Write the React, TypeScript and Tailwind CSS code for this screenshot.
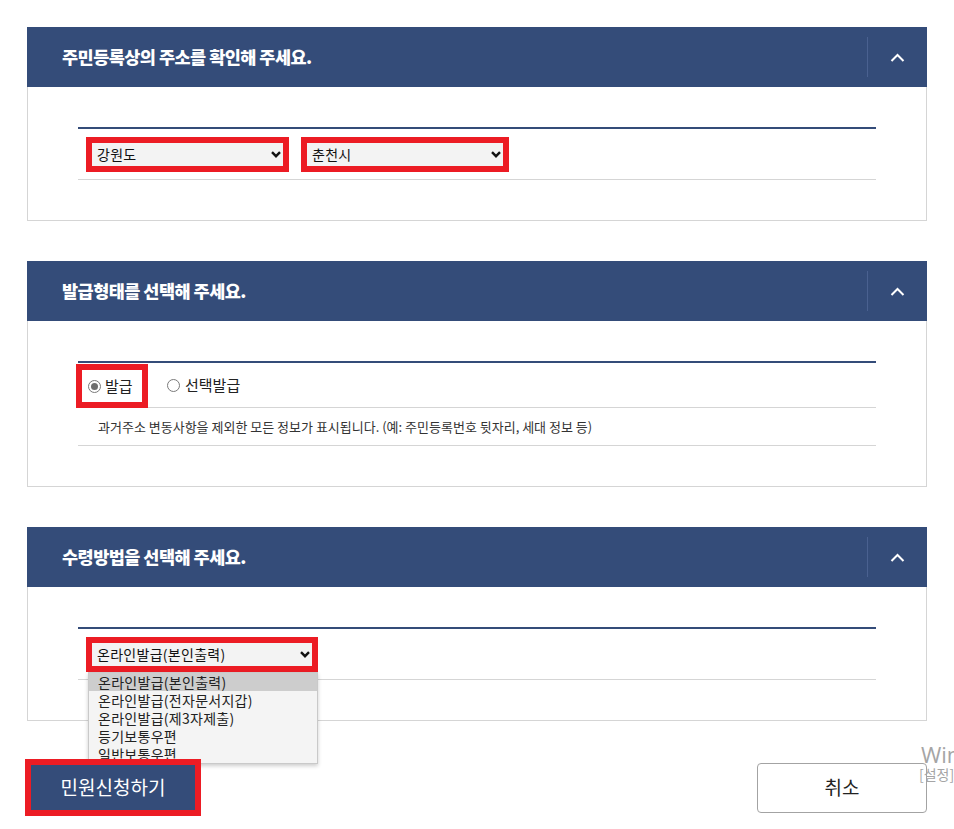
import { ReactNode } from "react";

const NAVY = "bg-[#344c79]";

function ChevronUp() {
  return (
    <svg width="15" height="9" viewBox="0 0 15 9" fill="none">
      <polyline points="1.5,8 7.5,2 13.5,8" stroke="white" strokeWidth="2" />
    </svg>
  );
}

function ChevronDown() {
  return (
    <svg width="10" height="7" viewBox="0 0 10 7" fill="none">
      <polyline points="1,1.2 5,5.2 9,1.2" stroke="#111" strokeWidth="2.4" />
    </svg>
  );
}

function Section({
  title,
  children,
  last,
}: {
  title: string;
  children: ReactNode;
  last?: boolean;
}) {
  return (
    <section className={last ? "mb-[38px]" : "mb-10"}>
      {/* 헤더 */}
      <div className={`flex h-[60px] items-center ${NAVY}`}>
        <h2 className="flex-1 pl-[35px] text-[17.5px] font-extrabold tracking-[-0.03em] text-white">
          {title}
        </h2>
        <div className="h-10 w-px bg-[#4a6190]" />
        <div className="flex w-[59px] items-center justify-center">
          <ChevronUp />
        </div>
      </div>
      {/* 내용 */}
      <div className="border border-t-0 border-[#d5d5d5] px-[50px] py-10">
        <div className="border-t-2 border-[#344c79]">{children}</div>
      </div>
    </section>
  );
}

function FakeSelect({ value, width }: { value: string; width: string }) {
  return (
    <div className="border-[6px] border-[#ec1c24]">
      <div
        className={`flex h-[23px] items-center justify-between bg-[#f3f3f3] pl-[5px] pr-[2px] text-[14px] tracking-[0.02em] text-[#111] ${width}`}
      >
        <span>{value}</span>
        <ChevronDown />
      </div>
    </div>
  );
}

function Radio({ checked }: { checked?: boolean }) {
  return (
    <span className="flex h-[13px] w-[13px] items-center justify-center rounded-full border border-[#7a7a7a] bg-white">
      {checked && <span className="h-[7px] w-[7px] rounded-full bg-[#6f6f6f]" />}
    </span>
  );
}

const options = [
  "온라인발급(본인출력)",
  "온라인발급(전자문서지갑)",
  "온라인발급(제3자제출)",
  "등기보통우편",
  "일반보통우편",
];

export default function App() {
  return (
    <div className="relative min-h-[829px] w-full overflow-hidden bg-white font-['Noto_Sans_CJK_KR','Noto_Sans',sans-serif] text-[#222]">
      <div className="ml-[27px] w-[900px] pt-[27px]">
        <Section title="주민등록상의 주소를 확인해 주세요.">
          <div className="flex h-[51px] items-center gap-3 border-b border-[#d5d5d5] pl-2">
            <FakeSelect value="강원도" width="w-[191px]" />
            <FakeSelect value="춘천시" width="w-[196px]" />
          </div>
        </Section>

        <Section title="발급형태를 선택해 주세요.">
          <div className="flex h-[45px] items-end border-b border-[#d5d5d5]">
            <div className="-mb-px -ml-[2px] flex h-[44px] w-[72px] items-center gap-[4px] border-[6px] border-[#ec1c24] pl-[6px] text-[15px]">
              <Radio checked />
              <span>발급</span>
            </div>
            <div className="ml-[19px] flex h-[44px] items-center gap-[5px] text-[15px]">
              <Radio />
              <span>선택발급</span>
            </div>
          </div>
          <div className="flex h-[38px] items-center border-b border-[#d5d5d5] pl-5 text-[13px] text-[#333]">
            과거주소 변동사항을 제외한 모든 정보가 표시됩니다. (예: 주민등록번호 뒷자리, 세대 정보 등)
          </div>
        </Section>

        <Section title="수령방법을 선택해 주세요." last>
          <div className="flex h-[51px] items-center border-b border-[#d5d5d5] pl-2">
            <div className="relative">
              <FakeSelect value="온라인발급(본인출력)" width="w-[220px]" />
              {/* 열린 목록 */}
              <ul className="absolute left-[2px] top-full z-10 w-[230px] border border-[#c9c9c9] bg-[#f4f4f4] text-[14px] tracking-[0.02em] shadow-[0_2px_4px_rgba(0,0,0,0.2)]">
                {options.map((o, i) => (
                  <li
                    key={o}
                    className={`h-[18px] pl-[9px] leading-[18px] ${i === 0 ? "bg-[#cdcdcd]" : ""}`}
                  >
                    {o}
                  </li>
                ))}
              </ul>
            </div>
          </div>
        </Section>

        {/* 버튼 */}
        <div className="flex items-center justify-between">
          <div className="relative z-20 -ml-[2px] border-[6px] border-[#ec1c24]">
            <button className={`flex h-[45px] w-[164px] items-center justify-center text-[19px] text-white ${NAVY}`}>
              민원신청하기
            </button>
          </div>
          <button className="flex h-[50px] w-[170px] items-center justify-center rounded-[4px] border border-[#a3a3a3] bg-white text-[19px] text-[#222]">
            취소
          </button>
        </div>
      </div>

      {/* Windows 워터마크 */}
      <div className="pointer-events-none absolute left-[921px] top-[738px] whitespace-nowrap font-['Open_Sans',sans-serif] text-[22px] text-[#a5a5a5]">
        Windows
      </div>
      <div className="pointer-events-none absolute left-[919px] top-[764px] whitespace-nowrap text-[14px] text-[#a5a5a5]">
        [설정]
      </div>
    </div>
  );
}
